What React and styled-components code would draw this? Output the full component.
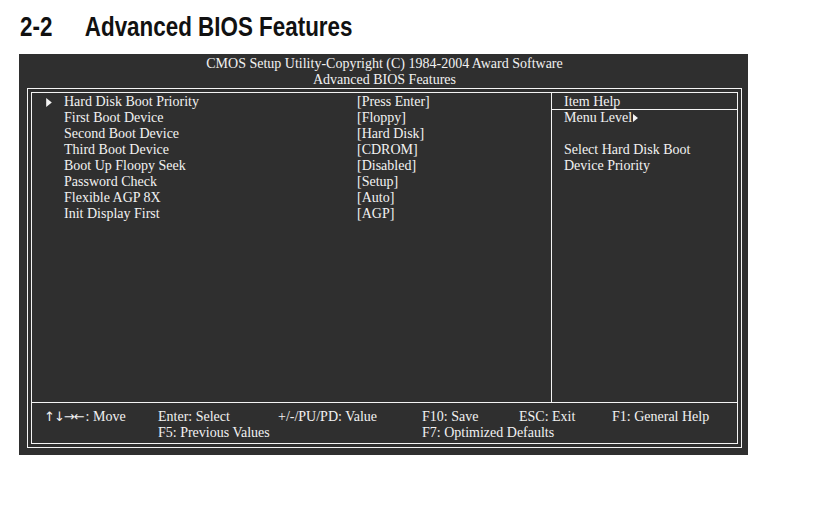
import React from 'react';
import styled, { createGlobalStyle } from 'styled-components';

const GlobalStyle = createGlobalStyle`
  html, body {
    margin: 0;
    padding: 0;
    background: #ffffff;
  }
`;

const items = [
  { label: 'Hard Disk Boot Priority', value: '[Press Enter]', selected: true },
  { label: 'First Boot Device', value: '[Floppy]' },
  { label: 'Second Boot Device', value: '[Hard Disk]' },
  { label: 'Third Boot Device', value: '[CDROM]' },
  { label: 'Boot Up Floopy Seek', value: '[Disabled]' },
  { label: 'Password Check', value: '[Setup]' },
  { label: 'Flexible AGP 8X', value: '[Auto]' },
  { label: 'Init Display First', value: '[AGP]' },
];

const Pointer = ({ size = 9 }) => (
  <svg width={Math.round(size * 0.62)} height={size} viewBox="0 0 5 8">
    <polygon points="0,0 5,4 0,8" fill="#f4f4f4" />
  </svg>
);

export default function App() {
  return (
    <Page>
      <GlobalStyle />
      <Heading>
        <HeadingText>
          <span className="num">2-2</span>
          <span>Advanced BIOS Features</span>
        </HeadingText>
      </Heading>
      <Screen>
        <Banner>
          <div>CMOS Setup Utility-Copyright (C) 1984-2004 Award Software</div>
          <div>Advanced BIOS Features</div>
        </Banner>
        <OuterFrame>
          <InnerFrame>
            <Body>
              <ItemList>
                {items.map(x => (
                  <ItemRow key={x.label}>
                    <Marker>{x.selected && <Pointer />}</Marker>
                    <span>{x.label}</span>
                    <span>{x.value}</span>
                  </ItemRow>
                ))}
              </ItemList>
              <HelpPane>
                <HelpTitle>Item Help</HelpTitle>
                <HelpLine>
                  Menu Level
                  <Pointer size={8} />
                </HelpLine>
                <HelpLine />
                <HelpLine>Select Hard Disk Boot</HelpLine>
                <HelpLine>Device Priority</HelpLine>
              </HelpPane>
            </Body>
            <Footer>
              <Key><Arrows>↑↓→←</Arrows>: Move</Key>
              <Key>Enter: Select</Key>
              <Key>+/-/PU/PD: Value</Key>
              <Key>F10: Save</Key>
              <Key>ESC: Exit</Key>
              <Key>F1: General Help</Key>
              <Key col={2}>F5: Previous Values</Key>
              <Key col={4}>F7: Optimized Defaults</Key>
            </Footer>
          </InnerFrame>
        </OuterFrame>
      </Screen>
    </Page>
  );
}

const Page = styled.div`
  width: 840px;
  height: 525px;
  background: #ffffff;
`;

const Heading = styled.h1`
  margin: 0;
  padding: 12px 0 0 20px;
  height: 54px;
  box-sizing: border-box;
  font-family: 'Liberation Sans', Arial, sans-serif;
  font-weight: bold;
  font-size: 28px;
  line-height: 30px;
  color: #111;
`;

/* the print heading is set in a narrow face; squeeze the regular one */
const HeadingText = styled.div`
  display: flex;
  transform: scaleX(0.8);
  transform-origin: left center;
  white-space: nowrap;

  .num {
    width: 81px;
  }
`;

const Screen = styled.div`
  margin-left: 19px;
  width: 729px;
  height: 401px;
  box-sizing: border-box;
  background: #2f2f2f;
  padding: 1px 6px 0 8px;
  color: #f2f2f2;
  font-family: 'Liberation Serif', 'Times New Roman', serif;
  font-size: 14px;
  line-height: 16px;
`;

const Banner = styled.div`
  height: 33px;
  box-sizing: border-box;
  padding-top: 1px;
  text-align: center;
`;

const OuterFrame = styled.div`
  border: 1px solid #f4f4f4;
  padding: 3px;
  height: 360px;
  box-sizing: border-box;
`;

const InnerFrame = styled.div`
  border: 1px solid #f4f4f4;
  height: 100%;
  box-sizing: border-box;
  display: flex;
  flex-direction: column;
`;

const Body = styled.div`
  flex: 1;
  display: grid;
  grid-template-columns: 520px 1fr;
  border-bottom: 1px solid #f4f4f4;
`;

const ItemList = styled.div`
  padding-top: 1px;
  border-right: 1px solid #f4f4f4;
`;

const ItemRow = styled.div`
  display: grid;
  grid-template-columns: 32px 293px 1fr;
  height: 16px;
  white-space: nowrap;
`;

const Marker = styled.span`
  display: flex;
  align-items: center;
  padding-left: 14px;
`;

const HelpPane = styled.div`
  display: flex;
  flex-direction: column;
`;

const HelpTitle = styled.div`
  height: 15px;
  padding: 1px 0 0 12px;
  border-bottom: 1px solid #f4f4f4;
`;

const HelpLine = styled.div`
  height: 16px;
  padding-left: 12px;
  display: flex;
  align-items: center;
  gap: 1px;
`;

const Footer = styled.div`
  height: 40px;
  box-sizing: border-box;
  padding: 6px 0 0 12px;
  display: grid;
  grid-template-columns: 114px 120px 144px 97px 93px 1fr;
  grid-auto-rows: 16px;
`;

const Key = styled.div`
  white-space: nowrap;
  grid-column: ${props => props.col || 'auto'};
`;

const Arrows = styled.span`
  font-family: 'DejaVu Sans', sans-serif;
  font-size: 13px;
  letter-spacing: -1px;
  margin-right: 2px;
`;
